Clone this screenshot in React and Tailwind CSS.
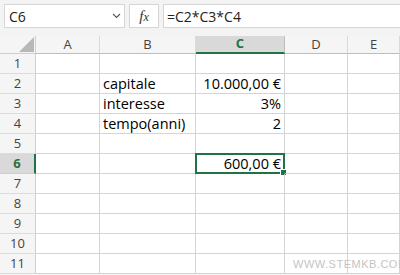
import React from 'react';

const cols = [
    { key: 'A', w: 'w-[64px]' },
    { key: 'B', w: 'w-[96px]' },
    { key: 'C', w: 'w-[89px]' },
    { key: 'D', w: 'w-[63px]' },
    { key: 'E', w: 'flex-1' },
];

const data = {
    2: { B: 'capitale', C: '10.000,00 €' },
    3: { B: 'interesse', C: '3%' },
    4: { B: 'tempo(anni)', C: '2' },
    6: { C: '600,00 €' },
};

const Cell = ({ row, col }) => {
    const value = data[row] && data[row][col.key];
    const isNumber = col.key === 'C';
    const selected = row === 6 && col.key === 'C';
    return (
        <div
            className={`${col.w} h-full relative border-r border-b border-[#d4d4d4] flex items-center px-[3px] text-[14.5px] text-black ${
                isNumber ? 'justify-end' : 'justify-start'
            }`}
        >
            {value}
            {selected && (
                <>
                    <div className="absolute -left-px -top-px -right-px -bottom-px border-2 border-[#217346]"></div>
                    <div className="absolute -right-[3px] -bottom-[3px] w-[5px] h-[5px] bg-[#217346] border border-white box-content"></div>
                </>
            )}
        </div>
    );
};

export default function App() {
    const rows = [1, 2, 3, 4, 5, 6, 7, 8, 9, 10, 11];

    return (
        <div className="relative w-[400px] h-[275px] overflow-hidden bg-[#f3f3f3] font-['Open_Sans',sans-serif]">
            {/* Formula bar */}
            <div className="flex items-center h-[36px] pt-[4px] pb-[8px] pl-[4px] gap-[4px]">
                <div className="w-[121px] h-full bg-white border border-[#d6d6d6] flex items-center justify-between pl-[4px] pr-[3px]">
                    <span className="text-[14px] text-[#222]">C6</span>
                    <svg width="9" height="6" viewBox="0 0 9 6" className="text-[#555]">
                        <path d="M1 1 L4.5 4.5 L8 1" fill="none" stroke="currentColor" strokeWidth="1.1" />
                    </svg>
                </div>
                <div className="w-[30px] h-full bg-white border border-[#d6d6d6] flex items-center justify-center">
                    <span className="font-['Liberation_Serif',serif] italic text-[15px] text-[#333]">
                        f<span className="text-[12px]">x</span>
                    </span>
                </div>
                <div className="flex-1 h-full bg-white border-t border-b border-l border-[#d6d6d6] flex items-center pl-[3px]">
                    <span className="text-[14px] text-[#222]">=C2*C3*C4</span>
                </div>
            </div>

            {/* Column headers */}
            <div className="flex h-[18px] bg-[#f5f5f5]">
                <div className="w-[36px] h-full relative border-r border-[#cfcfcf] border-b">
                    <svg width="16" height="16" viewBox="0 0 16 16" className="absolute left-[19px] top-[1px]">
                        <polygon points="15,0 15,15 0,15" fill="#b8b8b8" />
                    </svg>
                </div>
                {cols.map((c) => (
                    <div
                        key={c.key}
                        className={`${c.w} h-full flex items-center justify-center text-[13px] border-r ${
                            c.key === 'C'
                                ? 'bg-[#d9d9d9] text-[#217346] font-bold border-[#bdbdbd] border-b-2 border-b-[#217346]'
                                : 'text-[#444] border-[#d9d9d9] border-b border-b-[#bdbdbd]'
                        }`}
                    >
                        {c.key}
                    </div>
                ))}
            </div>

            {/* Grid */}
            <div className="bg-white">
                {rows.map((r) => (
                    <div key={r} className="flex h-[20px]">
                        <div
                            className={`w-[36px] h-full flex items-center justify-center text-[13px] border-b ${
                                r === 6
                                    ? 'bg-[#d9d9d9] text-[#217346] font-bold border-r-2 border-r-[#217346] border-b-[#cfcfcf]'
                                    : 'bg-[#f5f5f5] text-[#444] border-r border-[#cfcfcf] border-b-[#dcdcdc]'
                            }`}
                        >
                            {r}
                        </div>
                        {cols.map((c) => (
                            <Cell key={c.key} row={r} col={c} />
                        ))}
                    </div>
                ))}
            </div>

            {/* Watermark */}
            <div className="absolute left-[293px] top-[259px] whitespace-nowrap text-[11px] leading-none tracking-[0.5px] text-[#c4c4c4] font-['Liberation_Sans',sans-serif]">
                WWW.STEMKB.COM
            </div>
        </div>
    );
}
